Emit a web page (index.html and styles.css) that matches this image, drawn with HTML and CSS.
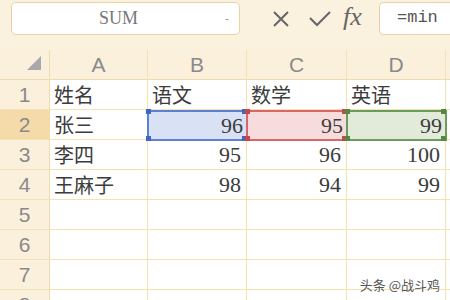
FILE: index.html
```html
<!DOCTYPE html>
<html>
<head>
    <title>Sheet</title>
    <link rel="stylesheet" href="styles.css">
</head>
<body>
    <div class="toolbar">
        <div class="name-box">
            <span class="name">SUM</span>
            <span class="drop">-</span>
        </div>
        <div class="tools">
            <svg class="icon" width="18" height="18" viewBox="0 0 18 18">
                <path d="M2 2 L16 16 M16 2 L2 16" stroke="#666" stroke-width="2" fill="none"/>
            </svg>
            <svg class="icon" width="24" height="20" viewBox="0 0 24 20">
                <path d="M2 9 L9 16 L22 3" stroke="#666" stroke-width="2" fill="none"/>
            </svg>
            <span class="fx">fx</span>
        </div>
        <div class="formula">=min</div>
    </div>

    <div class="sheet">
        <div class="corner"><span class="tri"></span></div>
        <div class="col-head">A</div>
        <div class="col-head">B</div>
        <div class="col-head">C</div>
        <div class="col-head">D</div>
        <div class="col-head"></div>

        <div class="row-head">1</div>
        <div class="cell">姓名</div>
        <div class="cell">语文</div>
        <div class="cell">数学</div>
        <div class="cell">英语</div>
        <div class="cell"></div>

        <div class="row-head active">2</div>
        <div class="cell">张三</div>
        <div class="cell num sel blue">96</div>
        <div class="cell num sel red">95</div>
        <div class="cell num sel green">99</div>
        <div class="cell"></div>

        <div class="row-head">3</div>
        <div class="cell">李四</div>
        <div class="cell num">95</div>
        <div class="cell num">96</div>
        <div class="cell num">100</div>
        <div class="cell"></div>

        <div class="row-head">4</div>
        <div class="cell">王麻子</div>
        <div class="cell num">98</div>
        <div class="cell num">94</div>
        <div class="cell num">99</div>
        <div class="cell"></div>

        <div class="row-head">5</div>
        <div class="cell"></div><div class="cell"></div><div class="cell"></div><div class="cell"></div><div class="cell"></div>
        <div class="row-head">6</div>
        <div class="cell"></div><div class="cell"></div><div class="cell"></div><div class="cell"></div><div class="cell"></div>
        <div class="row-head">7</div>
        <div class="cell"></div><div class="cell"></div><div class="cell"></div><div class="cell"></div><div class="cell"></div>
        <div class="row-head">8</div>
        <div class="cell"></div><div class="cell"></div><div class="cell"></div><div class="cell"></div><div class="cell"></div>
    </div>

    <div class="watermark">头条 @战斗鸡</div>
</body>
</html>
```

FILE: styles.css
```css
body {
    margin: 0;
    padding: 0;
    width: 450px;
    height: 300px;
    overflow: hidden;
    position: relative;
    background: #fff;
    font-family: "Liberation Sans", "Noto Sans CJK SC", sans-serif;
}
.toolbar {
    display: flex;
    align-items: flex-start;
    height: 50px;
    padding-top: 2px;
    box-sizing: border-box;
    background: #faf1df;
}
.name-box {
    display: flex;
    align-items: center;
    margin-left: 11px;
    width: 229px;
    height: 33px;
    box-sizing: border-box;
    background: #fff;
    border: 1px solid #e9d3a2;
    border-radius: 5px;
}
.name {
    flex: 1;
    text-align: center;
    font-family: "Liberation Serif", serif;
    font-size: 18px;
    color: #777;
}
.drop {
    width: 14px;
    font-size: 12px;
    color: #999;
}
.tools {
    display: flex;
    align-items: center;
    height: 33px;
    margin-left: 32px;
    width: 107px;
}
.tools svg:first-child {
    margin-right: 18px;
}
.tools svg + svg {
    margin-right: 11px;
}
.fx {
    font-family: "Liberation Serif", serif;
    font-style: italic;
    font-size: 26px;
    color: #666;
    margin-top: -3px;
}
.formula {
    width: 71px;
    height: 33px;
    box-sizing: border-box;
    padding: 5px 0 0 17px;
    background: #fff;
    border: 1px solid #e9d3a2;
    border-right: none;
    border-radius: 5px 0 0 5px;
    font-family: "Liberation Mono", monospace;
    font-size: 17px;
    color: #555;
}
.sheet {
    display: grid;
    grid-template-columns: 50px 98px 99px 100px 99px 1fr;
    grid-auto-rows: 30px;
}
.corner, .col-head, .row-head {
    background: #faf0dc;
    color: #8a8a8a;
    font-size: 21px;
    box-sizing: border-box;
}
.corner {
    position: relative;
    border-right: 1px solid #efdcac;
    border-bottom: 1px solid #efdcac;
}
.tri {
    position: absolute;
    left: 27px;
    top: 6px;
    width: 0;
    height: 0;
    border-left: 14px solid transparent;
    border-bottom: 14px solid #a9a9a9;
}
.col-head {
    text-align: center;
    line-height: 29px;
    border-right: 1px solid #f3e2b6;
    border-bottom: 1px solid #efdcac;
}
.row-head {
    text-align: center;
    line-height: 29px;
    border-right: 1px solid #efdcac;
    border-bottom: 1px solid #f3e2b6;
}
.row-head.active {
    background: #f4dba9;
}
.cell {
    box-sizing: border-box;
    border-right: 1px solid #f5e3ae;
    border-bottom: 1px solid #f5e3ae;
    padding: 0 4px;
    font-family: "Noto Sans CJK SC", sans-serif;
    font-size: 20px;
    line-height: 29px;
    color: #3c3c3c;
    white-space: nowrap;
    overflow: hidden;
}
.num {
    text-align: right;
    font-family: "Liberation Serif", serif;
    font-size: 22px;
    padding-right: 5px;
}
.sel {
    position: relative;
    overflow: visible;
    border: 2px solid;
    line-height: 27px;
    margin: 0 -1px -1px -1px;
    padding-right: 3px;
}
.sel::before {
    content: "";
    position: absolute;
    left: -3px;
    top: -3px;
    width: 5px;
    height: 5px;
}
.blue {
    background: #d9e1f5;
    border-color: #5d80d5;
}
.blue::before {
    background: #3f67c9;
    box-shadow: 96px 0 0 #3f67c9, 0 27px 0 #3f67c9, 96px 27px 0 #3f67c9;
}
.red {
    background: #f6dcdc;
    border-color: #d9676a;
}
.red::before {
    background: #c9474b;
    box-shadow: 97px 0 0 #c9474b, 0 27px 0 #c9474b, 97px 27px 0 #c9474b;
}
.green {
    background: #e2ebda;
    border-color: #6c9c5b;
}
.green::before {
    background: #4f8a3f;
    box-shadow: 96px 0 0 #4f8a3f, 0 27px 0 #4f8a3f, 96px 27px 0 #4f8a3f;
}
.watermark {
    position: absolute;
    right: 10px;
    bottom: 6px;
    font-family: "Noto Sans CJK SC", sans-serif;
    font-size: 13px;
    color: #555;
    text-shadow: 0 0 2px #fff, 0 0 2px #fff;
}
```
